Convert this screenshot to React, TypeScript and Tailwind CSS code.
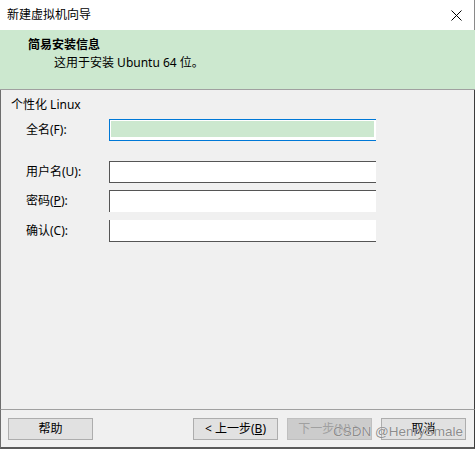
import React from 'react';

const font = { fontFamily: '"Noto Sans", "Noto Sans CJK SC", sans-serif' };

function Row({ label, mt, box }: { label: React.ReactNode; mt: string; box: string }) {
  return (
    <div className={`flex items-center ${mt}`}>
      <div className="w-[108px] shrink-0 pl-[25px] text-[12px] leading-[16px] text-black whitespace-nowrap">{label}</div>
      <div className={`w-[267px] h-[22px] shrink-0 bg-white ${box}`} />
    </div>
  );
}

function Button({ children, disabled }: { children: React.ReactNode; disabled?: boolean }) {
  return (
    <div
      className={`w-[85px] h-[22px] flex items-center justify-center text-[12px] border ${
        disabled ? 'bg-[#cccccc] border-[#bfbfbf] text-[#a0a0a0]' : 'bg-[#e1e1e1] border-[#adadad] text-black'
      }`}
    >
      {children}
    </div>
  );
}

export default function App() {
  return (
    <div className="w-[475px] h-[449px] flex flex-col bg-[#f0f0f0] relative overflow-hidden" style={font}>
      {/* Title bar */}
      <div className="h-[30px] bg-white flex items-center justify-between pl-[7px] pr-[12px] border-r border-[#8a8a8a]">
        <span className="text-[12px] text-black">新建虚拟机向导</span>
        <svg width="11" height="11" viewBox="0 0 11 11">
          <path d="M0.5 0.5 L10.5 10.5 M10.5 0.5 L0.5 10.5" stroke="#000" strokeWidth="1" />
        </svg>
      </div>

      {/* Header */}
      <div className="h-[60px] bg-[#cce8cf] border-b border-[#a0a0a0] pl-[28px] pt-[6px]">
        <div className="text-[12px] leading-[18px] font-bold text-black">简易安装信息</div>
        <div className="text-[12px] leading-[18px] text-black pl-[26px]">这用于安装 Ubuntu 64 位。</div>
      </div>

      {/* Body */}
      <div className="flex-1 border-l border-r border-[#6e6e6e] border-r-[#3c3c3c] pt-[7px]">
        <div className="pl-[10px] text-[12px] leading-[16px] text-black">个性化 Linux</div>
        <Row
          label="全名(F):"
          mt="mt-[6px]"
          box="border-t border-b border-l border-[#0078d7] relative after:content-[''] after:absolute after:left-[1px] after:right-[2px] after:top-[1px] after:bottom-[3px] after:bg-[#cce8cf]"
        />
        <Row label="用户名(U):" mt="mt-[20px]" box="border-t border-b border-l border-[#555555]" />
        <Row
          label={
            <>
              密码(<span className="underline">P</span>):
            </>
          }
          mt="mt-[7px]"
          box="border-t border-l border-[#555555]"
        />
        <Row label="确认(C):" mt="mt-[8px]" box="border-b border-l border-[#555555]" />
      </div>

      {/* Footer */}
      <div className="h-[40px] border-t border-[#a0a0a0] border-l border-l-[#6e6e6e] border-r border-r-[#3c3c3c] border-b-2 border-b-[#5a5a5a] pt-[8px] pl-[7px] flex">
        <Button>帮助</Button>
        <div className="ml-[100px] flex gap-[9px]">
          <Button>
            &lt; 上一步(<span className="underline">B</span>)
          </Button>
          <Button disabled>下一步(N) &gt;</Button>
          <Button>取消</Button>
        </div>
      </div>

      {/* Watermark */}
      <div
        className="absolute left-[333px] top-[423px] text-[13.5px] leading-[18px] text-[#8c8c8c] whitespace-nowrap"
        style={{ fontFamily: '"Liberation Sans", sans-serif', textShadow: '0 0 1px #ffffff' }}
      >
        CSDN @HenrySmale
      </div>
    </div>
  );
}
